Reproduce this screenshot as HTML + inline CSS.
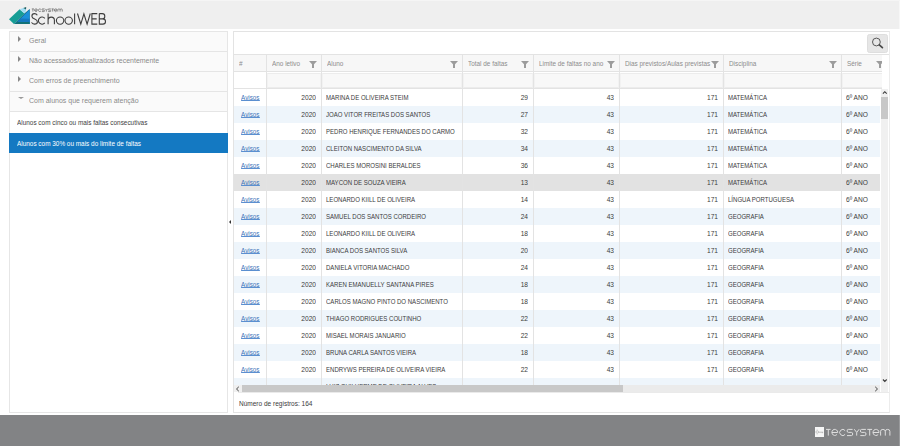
<!DOCTYPE html>
<html><head><meta charset="utf-8">
<style>
*{box-sizing:border-box;margin:0;padding:0}
html,body{width:900px;height:446px;overflow:hidden;background:#fff;font-family:"Liberation Sans",sans-serif}
#hdr{position:absolute;left:0;top:0;width:900px;height:29px;background:#efefef;box-shadow:inset 0 1px #f5f5f5,inset -1px 0 #f7f7f7}
#logo{position:absolute;left:0;top:0}
#ftr{position:absolute;left:0;top:415px;width:900px;height:31px;background:#828385;border-right:1px solid #9a9b9d}
#fbox{position:absolute;left:815px;top:427.4px;width:9px;height:9.6px;background:#f6f6f6}
#left{position:absolute;left:9px;top:31px;width:219px;height:382px;border:1px solid #e6e6e6;background:#fff}
.mi{position:absolute;left:0;width:217px;height:20px;background:#fafafa;border-bottom:1px solid #e5e5e5;font-size:7.4px;color:#8a8a8a}
.mi span{position:absolute;left:18.5px;top:3.8px;white-space:nowrap;transform:scaleX(.946);transform-origin:0 0}
.tri{position:absolute;left:8px;top:4px;width:0;height:0;border-top:3px solid transparent;border-bottom:3px solid transparent;border-left:3.5px solid #888}
.tri.down{left:7.5px;top:4.6px;border-left:3px solid transparent;border-right:3px solid transparent;border-top:2.8px solid #999;border-bottom:0}
.si{position:absolute;left:0;width:217px;height:21px;font-size:6.9px;color:#3e3e3e}
.si span{position:absolute;left:7px;top:6.5px;white-space:nowrap;transform:scaleX(.93);transform-origin:0 0}
#split{position:absolute;left:229px;top:220px;width:0;height:0;border-top:2px solid transparent;border-bottom:2px solid transparent;border-right:2px solid #333}
#right{position:absolute;left:233px;top:31px;width:657px;height:382px;border:1px solid #e3e3e3;border-right-color:#ececec;background:#fff;overflow:hidden}
#sbtn{position:absolute;left:866.5px;top:33.5px;width:21.5px;height:19px;background:#e6e6e6;border:1px solid #dedede;border-radius:2.5px}
#grid{position:absolute;left:234px;top:54px;width:655px;height:338px;overflow:hidden}
.hrow{position:absolute;left:0;top:0;width:648px;height:18px;background:#f7f7f7;border-top:1px solid #e3e3e3;border-bottom:1px solid #e3e3e3;overflow:hidden}
#gtop{position:absolute;left:882px;top:54px;width:7px;height:1px;background:#e3e3e3}
.h{position:absolute;top:0;height:16px;border-left:1px solid #e3e3e3;font-size:6.7px;color:#8c8c8c}
.h.c0{border-left:0}
.h span{position:absolute;left:4.8px;top:4.7px;white-space:nowrap;transform:scaleX(.955);transform-origin:0 0}
.h .fn{position:absolute;right:4.2px;top:5.5px}
.h.c7 .fn{right:auto;left:33.5px}
.frow{position:absolute;left:0;top:18px;width:648px;height:17px;z-index:2;overflow:hidden;background:#fff;border-bottom:1px solid #e3e3e3}
.f{position:absolute;top:0;height:16px;border-left:1px solid #e3e3e3}
.f i{position:absolute;left:0;top:1px;right:0;bottom:0;background:#f8f8f8;border:1px solid #ececec;border-left-color:#f2f2f2;border-right-color:#f2f2f2}
#rows{position:absolute;left:0;top:35px;width:646px;height:296px;overflow:hidden}
.r{position:absolute;left:0;width:646px;height:17px;background:#fff}
.r.alt{background:#eef5fb}
.r.sel{background:#e2e2e2}
.r a,.r b{position:absolute;top:0;height:17px;border-left:1px solid #e3e3e3;font-weight:normal;font-size:7.2px;color:#3c3c3c;white-space:nowrap;padding-top:3.7px;overflow:hidden}
.r i{font-style:normal;display:inline-block;transform:scaleX(.84);transform-origin:0 0}
.r a{border-left:0;color:#3a72b8;text-align:center;font-size:7px;padding-top:5.1px;padding-left:0.9px}
.r a u{display:inline-block;position:relative;text-decoration:none;transform:scaleX(.895);transform-origin:50% 0}
.r a u::after{content:"";position:absolute;left:0;right:0;top:6.1px;height:1px;background:#5b8fd0}
.r .c1,.r .c3,.r .c4,.r .c5{text-align:right;padding-right:5px}
.r .c1 i,.r .c3 i,.r .c4 i,.r .c5 i{transform:scaleX(.92);transform-origin:100% 0}
.r .c7 i{transform:scaleX(.92)}
.r .c2,.r .c6,.r .c7{padding-left:4.3px}
#vsb{position:absolute;left:881px;top:89px;width:7px;height:303px;background:#f0f0f0}
#vthumb{position:absolute;left:881px;top:97px;width:7px;height:22px;background:#c8c8c8}
#hsb{position:absolute;left:234px;top:385px;width:646px;height:7px;background:#ebebeb}
#hbtnl{position:absolute;left:234px;top:385px;width:8px;height:7px;background:#f0f0f0}
#hthumb{position:absolute;left:242px;top:385px;width:381px;height:7px;background:#c8c8c8}
.arr{position:absolute;font-size:7px;color:#444;line-height:7px}
#cnt{position:absolute;left:238px;top:392px;width:651px;height:20px;border-top:1px solid #eaeaea;font-size:6.9px;color:#3c3c3c}
#cnt span{position:absolute;left:0.8px;top:6.9px;white-space:nowrap;transform:scaleX(.945);transform-origin:0 0}
.c0{left:0;width:32px}
.c1{left:32px;width:55px}
.c2{left:87px;width:141px}
.c3{left:228px;width:71px}
.c4{left:299px;width:86px}
.c5{left:385px;width:104px}
.c6{left:489px;width:118px}
.c7{left:607px;width:48px}
</style></head><body>
<div id="hdr">
<svg id="logo" width="40" height="29" viewBox="0 0 40 29">
<path d="M13.9 24 L24.3 13.6 L29.7 9 L29.7 24 Z" fill="#0f5f6e"/>
<path d="M29.7 9.2 L29.7 24 L15 24 Z" fill="#1b8fd9"/>
<path d="M15 24 L29.7 24 L29.7 21.9 L17.6 21.4 Z" fill="#127277"/>
<path d="M17.6 21.4 L29.7 21.9 L29.7 18.8 L20.6 18.4 Z" fill="#1677c0"/>
<path d="M9 19.3 L19.6 9.2 L24.5 13.6 L13.9 24 Z" fill="#169d95"/>
<path d="M19.6 9.2 L23.3 7.9 L26 8.2 L26 10.9 L24.5 13.6 Z" fill="#a3ddf4"/>
<path d="M23.3 7.9 L26.2 7.1 L26 9.4 Z" fill="#1f5f5f"/>
</svg>
<svg style="position:absolute;left:0;top:0.5px" width="120" height="29" viewBox="0 0 120 29">
<g fill="none" stroke="#3e3e3e" stroke-width="1.1" transform="translate(0.3 12.6) scale(1 0.975) translate(0 -12.6)">
<path d="M37 14.3C36.4 13.2 35.3 12.6 34.1 12.6C32.5 12.6 31.6 13.7 31.6 15.2C31.6 16.8 32.7 17.5 34.4 18.1C36.1 18.7 37.1 19.6 37.1 21.1C37.1 22.6 35.9 23.4 34.2 23.4C32.8 23.4 31.8 22.8 31.2 21.6"/>
<path d="M44.5 17.5A3.6 3.65 0 1 0 44.5 22.1"/>
<path d="M47.8 12.4V23.5M47.8 19.4C47.8 17.4 49 16.2 51 16.2C53 16.2 54.1 17.4 54.1 19.4V23.5"/>
<circle cx="59.8" cy="19.8" r="3.7"/>
<circle cx="68.4" cy="19.8" r="3.7"/>
<path d="M74.3 12.4V23.5"/>
<path d="M77.2 12.5L80.5 23.4L83.6 12.9L86.8 23.4L90 12.5"/>
<path d="M97 12.6H91.6V23.4H97M91.6 18H96.4"/>
<path d="M99 12.6V23.4H102.6C104.3 23.4 105.2 22.4 105.2 20.7C105.2 19 104.2 18 102.4 18H99M102.2 18C103.8 18 104.5 17 104.5 15.3C104.5 13.6 103.6 12.6 102 12.6H99"/>
</g>
<g fill="none" stroke="#6a6a6a" stroke-width="1.6" transform="translate(31.8 7.3) scale(0.477 0.43)"><path d="M0 1.4H4.6M2.3 1.4V7.6"/>
<path d="M5.9 4.5H11.7A2.9 3.05 0 1 0 10.9 6.5"/>
<path d="M19.1 2.6A3 3.05 0 1 0 19.1 6.4"/>
<path d="M26.6 1.4H22.3Q21.1 1.4 21.1 2.9Q21.1 4.4 22.4 4.4H25.4Q26.7 4.4 26.7 6Q26.7 7.6 25.4 7.6H21"/>
<path d="M28.2 1.2L30.7 4.4L33.2 1.2M30.7 4.4V7.6"/>
<path d="M39.9 1.4H35.6Q34.4 1.4 34.4 2.9Q34.4 4.4 35.7 4.4H38.7Q40 4.4 40 6Q40 7.6 38.7 7.6H34.3"/>
<path d="M41.3 1.4H46.1M43.7 1.4V7.6"/>
<path d="M47 4.5H53A3 3.05 0 1 0 52.2 6.5"/>
<path d="M54.6 7.6V3.4Q54.6 1.4 56.9 1.4Q59.3 1.4 59.3 3.4V7.6M59.3 3.4Q59.3 1.4 61.6 1.4Q63.9 1.4 63.9 3.4V7.6"/></g>
</svg>
</div>
<div id="left">
  <div class="mi" style="top:0"><i class="tri"></i><span>Geral</span></div>
  <div class="mi" style="top:20px"><i class="tri"></i><span>Não acessados/atualizados recentemente</span></div>
  <div class="mi" style="top:40px"><i class="tri"></i><span>Com erros de preenchimento</span></div>
  <div class="mi" style="top:60px"><i class="tri down"></i><span>Com alunos que requerem atenção</span></div>
  <div class="si" style="top:80px"><span>Alunos com cinco ou mais faltas consecutivas</span></div>
  <div class="si" style="top:101px;height:20px;background:#1479c2;color:#fff;left:-1px;width:219px"><span style="left:8px;top:7px">Alunos com 30% ou mais do limite de faltas</span></div>
</div>
<div id="split"></div>
<div id="right"></div>
<div id="sbtn"><svg width="19" height="16" viewBox="0 0 19 16" style="position:absolute;left:0;top:0"><circle cx="8.4" cy="7" r="3.9" fill="none" stroke="#505050" stroke-width="0.95"/><path d="M11.3 9.8 L14.4 12.6" stroke="#484848" stroke-width="1.7" stroke-linecap="round"/></svg></div>
<div id="grid">
  <div class="hrow"><div class="h c0"><span>#</span></div><div class="h c1"><span>Ano letivo</span><svg class="fn" width="8" height="8" viewBox="0 0 8 8"><path d="M0 0H8L5 3.2V7H3V3.2Z" fill="#9c9c9c"/></svg></div><div class="h c2"><span>Aluno</span><svg class="fn" width="8" height="8" viewBox="0 0 8 8"><path d="M0 0H8L5 3.2V7H3V3.2Z" fill="#9c9c9c"/></svg></div><div class="h c3"><span>Total de faltas</span><svg class="fn" width="8" height="8" viewBox="0 0 8 8"><path d="M0 0H8L5 3.2V7H3V3.2Z" fill="#9c9c9c"/></svg></div><div class="h c4"><span>Limite de faltas no ano</span><svg class="fn" width="8" height="8" viewBox="0 0 8 8"><path d="M0 0H8L5 3.2V7H3V3.2Z" fill="#9c9c9c"/></svg></div><div class="h c5"><span>Dias previstos/Aulas previstas</span><svg class="fn" width="8" height="8" viewBox="0 0 8 8"><path d="M0 0H8L5 3.2V7H3V3.2Z" fill="#9c9c9c"/></svg></div><div class="h c6"><span>Disciplina</span><svg class="fn" width="8" height="8" viewBox="0 0 8 8"><path d="M0 0H8L5 3.2V7H3V3.2Z" fill="#9c9c9c"/></svg></div><div class="h c7"><span>Série</span><svg class="fn" width="8" height="8" viewBox="0 0 8 8"><path d="M0 0H8L5 3.2V7H3V3.2Z" fill="#9c9c9c"/></svg></div></div>
  <div class="frow"><div class="f c1"><i></i></div><div class="f c2"><i></i></div><div class="f c3"><i></i></div><div class="f c4"><i></i></div><div class="f c5"><i></i></div><div class="f c6"><i></i></div><div class="f c7"><i></i></div></div>
  <div id="rows"><div class="r" style="top:0px"><a class="c0"><u>Avisos</u></a><b class="c1"><i>2020</i></b><b class="c2"><i>MARINA DE OLIVEIRA STEIM</i></b><b class="c3"><i>29</i></b><b class="c4"><i>43</i></b><b class="c5"><i>171</i></b><b class="c6"><i>MATEMÁTICA</i></b><b class="c7"><i>6º ANO</i></b></div>
<div class="r alt" style="top:17px"><a class="c0"><u>Avisos</u></a><b class="c1"><i>2020</i></b><b class="c2"><i>JOAO VITOR FREITAS DOS SANTOS</i></b><b class="c3"><i>27</i></b><b class="c4"><i>43</i></b><b class="c5"><i>171</i></b><b class="c6"><i>MATEMÁTICA</i></b><b class="c7"><i>6º ANO</i></b></div>
<div class="r" style="top:34px"><a class="c0"><u>Avisos</u></a><b class="c1"><i>2020</i></b><b class="c2"><i>PEDRO HENRIQUE FERNANDES DO CARMO</i></b><b class="c3"><i>32</i></b><b class="c4"><i>43</i></b><b class="c5"><i>171</i></b><b class="c6"><i>MATEMÁTICA</i></b><b class="c7"><i>6º ANO</i></b></div>
<div class="r alt" style="top:51px"><a class="c0"><u>Avisos</u></a><b class="c1"><i>2020</i></b><b class="c2"><i>CLEITON NASCIMENTO DA SILVA</i></b><b class="c3"><i>34</i></b><b class="c4"><i>43</i></b><b class="c5"><i>171</i></b><b class="c6"><i>MATEMÁTICA</i></b><b class="c7"><i>6º ANO</i></b></div>
<div class="r" style="top:68px"><a class="c0"><u>Avisos</u></a><b class="c1"><i>2020</i></b><b class="c2"><i>CHARLES MOROSINI BERALDES</i></b><b class="c3"><i>36</i></b><b class="c4"><i>43</i></b><b class="c5"><i>171</i></b><b class="c6"><i>MATEMÁTICA</i></b><b class="c7"><i>6º ANO</i></b></div>
<div class="r alt sel" style="top:85px"><a class="c0"><u>Avisos</u></a><b class="c1"><i>2020</i></b><b class="c2"><i>MAYCON DE SOUZA VIEIRA</i></b><b class="c3"><i>13</i></b><b class="c4"><i>43</i></b><b class="c5"><i>171</i></b><b class="c6"><i>MATEMÁTICA</i></b><b class="c7"><i>6º ANO</i></b></div>
<div class="r" style="top:102px"><a class="c0"><u>Avisos</u></a><b class="c1"><i>2020</i></b><b class="c2"><i>LEONARDO KIILL DE OLIVEIRA</i></b><b class="c3"><i>14</i></b><b class="c4"><i>43</i></b><b class="c5"><i>171</i></b><b class="c6"><i>LÍNGUA PORTUGUESA</i></b><b class="c7"><i>6º ANO</i></b></div>
<div class="r alt" style="top:119px"><a class="c0"><u>Avisos</u></a><b class="c1"><i>2020</i></b><b class="c2"><i>SAMUEL DOS SANTOS CORDEIRO</i></b><b class="c3"><i>24</i></b><b class="c4"><i>43</i></b><b class="c5"><i>171</i></b><b class="c6"><i>GEOGRAFIA</i></b><b class="c7"><i>6º ANO</i></b></div>
<div class="r" style="top:136px"><a class="c0"><u>Avisos</u></a><b class="c1"><i>2020</i></b><b class="c2"><i>LEONARDO KIILL DE OLIVEIRA</i></b><b class="c3"><i>18</i></b><b class="c4"><i>43</i></b><b class="c5"><i>171</i></b><b class="c6"><i>GEOGRAFIA</i></b><b class="c7"><i>6º ANO</i></b></div>
<div class="r alt" style="top:153px"><a class="c0"><u>Avisos</u></a><b class="c1"><i>2020</i></b><b class="c2"><i>BIANCA DOS SANTOS SILVA</i></b><b class="c3"><i>20</i></b><b class="c4"><i>43</i></b><b class="c5"><i>171</i></b><b class="c6"><i>GEOGRAFIA</i></b><b class="c7"><i>6º ANO</i></b></div>
<div class="r" style="top:170px"><a class="c0"><u>Avisos</u></a><b class="c1"><i>2020</i></b><b class="c2"><i>DANIELA VITORIA MACHADO</i></b><b class="c3"><i>24</i></b><b class="c4"><i>43</i></b><b class="c5"><i>171</i></b><b class="c6"><i>GEOGRAFIA</i></b><b class="c7"><i>6º ANO</i></b></div>
<div class="r alt" style="top:187px"><a class="c0"><u>Avisos</u></a><b class="c1"><i>2020</i></b><b class="c2"><i>KAREN EMANUELLY SANTANA PIRES</i></b><b class="c3"><i>18</i></b><b class="c4"><i>43</i></b><b class="c5"><i>171</i></b><b class="c6"><i>GEOGRAFIA</i></b><b class="c7"><i>6º ANO</i></b></div>
<div class="r" style="top:204px"><a class="c0"><u>Avisos</u></a><b class="c1"><i>2020</i></b><b class="c2"><i>CARLOS MAGNO PINTO DO NASCIMENTO</i></b><b class="c3"><i>18</i></b><b class="c4"><i>43</i></b><b class="c5"><i>171</i></b><b class="c6"><i>GEOGRAFIA</i></b><b class="c7"><i>6º ANO</i></b></div>
<div class="r alt" style="top:221px"><a class="c0"><u>Avisos</u></a><b class="c1"><i>2020</i></b><b class="c2"><i>THIAGO RODRIGUES COUTINHO</i></b><b class="c3"><i>22</i></b><b class="c4"><i>43</i></b><b class="c5"><i>171</i></b><b class="c6"><i>GEOGRAFIA</i></b><b class="c7"><i>6º ANO</i></b></div>
<div class="r" style="top:238px"><a class="c0"><u>Avisos</u></a><b class="c1"><i>2020</i></b><b class="c2"><i>MISAEL MORAIS JANUARIO</i></b><b class="c3"><i>22</i></b><b class="c4"><i>43</i></b><b class="c5"><i>171</i></b><b class="c6"><i>GEOGRAFIA</i></b><b class="c7"><i>6º ANO</i></b></div>
<div class="r alt" style="top:255px"><a class="c0"><u>Avisos</u></a><b class="c1"><i>2020</i></b><b class="c2"><i>BRUNA CARLA SANTOS VIEIRA</i></b><b class="c3"><i>18</i></b><b class="c4"><i>43</i></b><b class="c5"><i>171</i></b><b class="c6"><i>GEOGRAFIA</i></b><b class="c7"><i>6º ANO</i></b></div>
<div class="r" style="top:272px"><a class="c0"><u>Avisos</u></a><b class="c1"><i>2020</i></b><b class="c2"><i>ENDRYWS PEREIRA DE OLIVEIRA VIEIRA</i></b><b class="c3"><i>22</i></b><b class="c4"><i>43</i></b><b class="c5"><i>171</i></b><b class="c6"><i>GEOGRAFIA</i></b><b class="c7"><i>6º ANO</i></b></div>
<div class="r alt" style="top:289px"><a class="c0"></a><b class="c1"></b><b class="c2"><i>LUIZ GUILHERME DE OLIVEIRA ALVES</i></b><b class="c3"></b><b class="c4"></b><b class="c5"></b><b class="c6"></b><b class="c7"></b></div></div>
</div>
<div id="gtop"></div><div id="vsb"></div><div id="vthumb"></div>
<svg style="position:absolute;left:882px;top:90px" width="6" height="5" viewBox="0 0 6 5"><path d="M0.9 3.6 L2.8 1.7 L4.7 3.6" fill="none" stroke="#3a3a3a" stroke-width="1.1"/></svg>
<svg style="position:absolute;left:882px;top:378px" width="6" height="5" viewBox="0 0 6 5"><path d="M0.9 1.5 L2.8 3.4 L4.7 1.5" fill="none" stroke="#3a3a3a" stroke-width="1.1"/></svg>
<div id="hsb"></div><div id="hbtnl"></div><div id="hthumb"></div>
<svg style="position:absolute;left:235px;top:386px" width="5" height="6" viewBox="0 0 5 6"><path d="M3.8 0.8 L1.5 3 L3.8 5.2" fill="none" stroke="#444" stroke-width="1"/></svg>
<svg style="position:absolute;left:874px;top:386px" width="5" height="6" viewBox="0 0 5 6"><path d="M1.2 0.8 L3.5 3 L1.2 5.2" fill="none" stroke="#444" stroke-width="1"/></svg>
<div id="cnt"><span>Número de registros: 164</span></div>
<div id="ftr"></div>
<div id="fbox"><svg width="9" height="10" viewBox="0 0 9 10" style="position:absolute;left:0;top:0"><circle cx="2.2" cy="5" r="1.3" fill="none" stroke="#b0b0b0" stroke-width="0.7"/><path d="M3.5 5.2 H8.2 M7.4 5.2 V6.2" stroke="#a8a8a8" stroke-width="0.7"/><path d="M1.5 2.4 H2.8 M1.5 7.6 H2.8" stroke="#d0d0d0" stroke-width="0.5"/></svg></div>
<svg id="ftxt" width="66" height="9" viewBox="0 0 66 9" style="position:absolute;left:826px;top:428px"><g fill="none" stroke="#dedede" stroke-width="1" stroke-linecap="butt">
<path d="M0 1.4H4.6M2.3 1.4V7.6"/>
<path d="M5.9 4.5H11.7A2.9 3.05 0 1 0 10.9 6.5"/>
<path d="M19.1 2.6A3 3.05 0 1 0 19.1 6.4"/>
<path d="M26.6 1.4H22.3Q21.1 1.4 21.1 2.9Q21.1 4.4 22.4 4.4H25.4Q26.7 4.4 26.7 6Q26.7 7.6 25.4 7.6H21"/>
<path d="M28.2 1.2L30.7 4.4L33.2 1.2M30.7 4.4V7.6"/>
<path d="M39.9 1.4H35.6Q34.4 1.4 34.4 2.9Q34.4 4.4 35.7 4.4H38.7Q40 4.4 40 6Q40 7.6 38.7 7.6H34.3"/>
<path d="M41.3 1.4H46.1M43.7 1.4V7.6"/>
<path d="M47 4.5H53A3 3.05 0 1 0 52.2 6.5"/>
<path d="M54.6 7.6V3.4Q54.6 1.4 56.9 1.4Q59.3 1.4 59.3 3.4V7.6M59.3 3.4Q59.3 1.4 61.6 1.4Q63.9 1.4 63.9 3.4V7.6"/>
</g></svg>
</body></html>
